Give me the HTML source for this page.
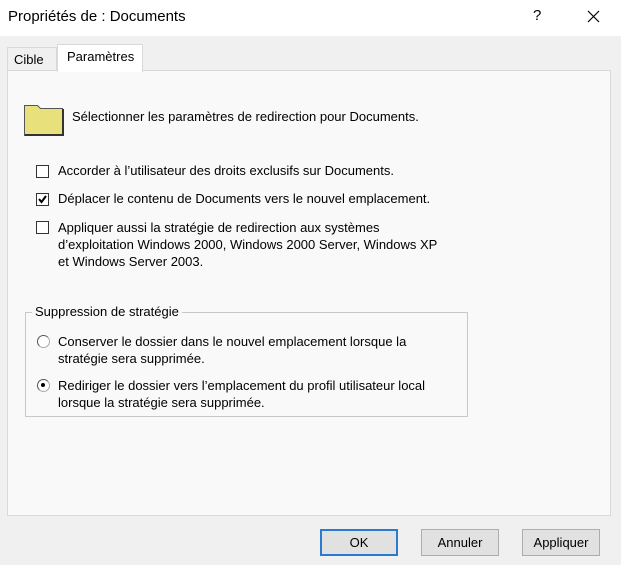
<!DOCTYPE html>
<html><head><meta charset="utf-8"><style>
body{margin:0;width:621px;height:565px;background:#f0f0f0;position:relative;overflow:hidden;font-family:"Liberation Sans",Arial,sans-serif;font-size:13px;color:#000}
.a{position:absolute;white-space:nowrap}
.cb{position:absolute;width:11px;height:11px;border:1px solid #333;background:#fff}
.rb{position:absolute;width:11px;height:11px;border-radius:50%;background:#fff;border:1px solid #aaa;border-top-color:#555;border-left-color:#555}
.btn{position:absolute;top:529px;width:76px;height:25px;border:1px solid #adadad;background:#e1e1e1;text-align:center;line-height:25px;font-size:13px}
</style></head><body>
<div class="a" style="left:0;top:0;width:621px;height:36px;background:#fff"></div>
<div class="a" style="left:8px;top:8px;font-size:15px">Propriétés de : Documents</div>
<div class="a" style="left:533px;top:7px;font-size:15px">?</div>
<svg class="a" style="left:587px;top:10px" width="13" height="13"><path d="M1 1L12 12M12 1L1 12" stroke="#000" stroke-width="1.2"/></svg>
<div class="a" style="left:7px;top:70px;width:604px;height:446px;border:1px solid #d9d9d9;background:#f9f9f9;box-sizing:border-box"></div>
<div class="a" style="left:7px;top:47px;width:50px;height:23px;border:1px solid #d9d9d9;border-bottom:none;box-sizing:border-box;background:#f0f0f0"></div>
<div class="a" style="left:14px;top:52px">Cible</div>
<div class="a" style="left:57px;top:44px;width:86px;height:28px;border:1px solid #d9d9d9;border-bottom:none;box-sizing:border-box;background:#fff"></div>
<div class="a" style="left:67px;top:49px">Paramètres</div>
<svg class="a" style="left:23px;top:101px" width="42" height="36"><path d="M1.5 4.5h13l3 3h22v27h-38z" fill="#e8e07a" stroke="#555"/><path d="M2 34h38V8" fill="none" stroke="#333" stroke-width="2"/></svg>
<div class="a" style="left:72px;top:109px">Sélectionner les paramètres de redirection pour Documents.</div>
<div class="cb" style="left:36px;top:165px"></div>
<div class="a" style="left:58px;top:163px">Accorder à l’utilisateur des droits exclusifs sur Documents.</div>
<div class="cb" style="left:36px;top:193px"></div>
<svg class="a" style="left:37px;top:194px" width="11" height="11"><path d="M2 5l2.5 3L9 2" fill="none" stroke="#000" stroke-width="2"/></svg>
<div class="a" style="left:58px;top:191px">Déplacer le contenu de Documents vers le nouvel emplacement.</div>
<div class="cb" style="left:36px;top:221px"></div>
<div class="a" style="left:58px;top:219px;line-height:17px">Appliquer aussi la stratégie de redirection aux systèmes<br>d’exploitation Windows 2000, Windows 2000 Server, Windows XP<br>et Windows Server 2003.</div>
<div class="a" style="left:25px;top:312px;width:443px;height:105px;border:1px solid #c8c8c8;box-sizing:border-box"></div>
<div class="a" style="left:32px;top:304px;background:#f9f9f9;padding:0 3px">Suppression de stratégie</div>
<div class="rb" style="left:37px;top:335px"></div>
<div class="a" style="left:58px;top:333px;line-height:17px">Conserver le dossier dans le nouvel emplacement lorsque la<br>stratégie sera supprimée.</div>
<div class="rb" style="left:37px;top:379px"></div>
<div class="a" style="left:41px;top:383px;width:4px;height:4px;border-radius:50%;background:#000"></div>
<div class="a" style="left:58px;top:377px;line-height:17px">Rediriger le dossier vers l’emplacement du profil utilisateur local<br>lorsque la stratégie sera supprimée.</div>
<div class="btn" style="left:320px;border:2px solid #2a7bd0;width:74px;height:23px;line-height:23px">OK</div>
<div class="btn" style="left:421px">Annuler</div>
<div class="btn" style="left:522px">Appliquer</div>
</body></html>
